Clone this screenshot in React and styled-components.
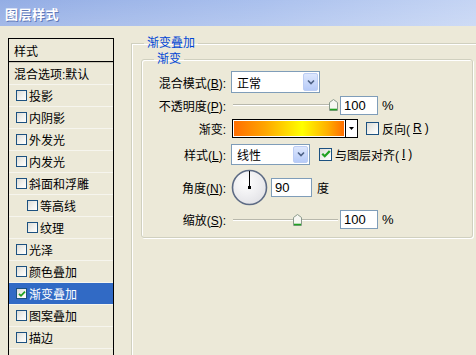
import React from 'react';
import styled, { createGlobalStyle } from 'styled-components';

const GlobalStyle = createGlobalStyle`
  html, body {
    margin: 0;
    padding: 0;
    background: #ece9d8;
  }
  body {
    font-family: "Liberation Sans", "Noto Sans CJK SC", sans-serif;
    font-size: 12px;
    color: #000;
    overflow: hidden;
  }
`;

const Window = styled.div`
  width: 476px;
  height: 355px;
  overflow: hidden;
  background: #ece9d8;
  display: flex;
  flex-direction: column;
`;

const TitleBar = styled.div`
  height: 26px;
  flex: none;
  display: flex;
  align-items: center;
  padding-left: 5px;
  background: linear-gradient(to bottom, rgba(255,255,255,0.08), rgba(255,255,255,0.22)),
    linear-gradient(to right, #8aa6e2 0%, #a3bbec 55%, #c0d1f3 100%);
  color: #fff;
  font-weight: bold;
  font-size: 13px;
  letter-spacing: 0.5px;
  text-shadow: 1px 1px 0 #5f78b8;
`;

const Body = styled.div`
  flex: 1;
  display: flex;
  padding: 12px 0 0 8px;
  min-height: 0;
`;

/* ---------- left style list ---------- */

const StyleList = styled.div`
  width: 104px;
  flex: none;
  height: 330px;
  border: 1px solid #000;
  border-bottom: none;
  display: flex;
  flex-direction: column;
`;

const ListHeader = styled.div`
  height: 22px;
  flex: none;
  display: flex;
  align-items: center;
  padding-left: 5px;
  border-bottom: 1px solid #000;
  box-shadow: 0 1px 0 #c9c6b6;
`;

const ListItem = styled.div`
  height: 21px;
  flex: none;
  display: flex;
  align-items: center;
  gap: 2px;
  padding-left: ${({ $indent }) => ($indent ? 18 : 7)}px;
  border-bottom: 1px solid #f6f5ee;
  background: ${({ $selected }) => ($selected ? '#316ac5' : 'transparent')};
  color: ${({ $selected }) => ($selected ? '#fff' : '#000')};
  margin-top: ${({ $first }) => ($first ? '1px' : '0')};
`;

const ListText = styled.span`
  white-space: nowrap;
  margin-left: ${({ $plain }) => ($plain ? -2 : 0)}px;
`;

/* ---------- checkbox ---------- */

const Box = styled.span`
  width: ${({ $size }) => $size}px;
  height: ${({ $size }) => $size}px;
  box-sizing: border-box;
  flex: none;
  border: 1px solid #1c5180;
  background: linear-gradient(135deg, #dcdcd7 0%, #f4f4f1 60%, #ffffff 100%);
  display: flex;
  align-items: center;
  justify-content: center;
`;

const CheckBox = ({ checked, size = 11 }) => (
  <Box $size={size}>
    {checked && (
      <svg width={size - 3} height={size - 3} viewBox="0 0 8 8">
        <path d="M1 3.8 L3 5.8 L7 1.6" fill="none" stroke="#21a121" strokeWidth="1.8" />
      </svg>
    )}
  </Box>
);

/* ---------- right panel ---------- */

const Right = styled.div`
  flex: 1;
  margin-left: 17px;
  margin-top: -3px;
  min-width: 0;
`;

const OuterGroup = styled.fieldset`
  margin: 0;
  padding: 0 0 0 9px;
  width: 420px;
  height: 340px;
  border: 1px solid #d0d0bf;
  border-right: none;
  border-bottom: none;
  box-shadow: inset 1px 1px 0 #fff;
`;

const GroupTitle = styled.legend`
  margin-left: ${({ $ml }) => $ml}px;
  padding: 0 3px;
  line-height: 16px;
  color: #0046d5;
`;

const InnerGroup = styled.fieldset`
  margin: 0;
  padding: 0;
  width: 332px;
  height: 187px;
  box-sizing: border-box;
  border: 1px solid #d0d0bf;
  border-radius: 3px;
  box-shadow: inset 1px 1px 0 #fff, 1px 1px 0 #fff;
  display: flex;
  flex-direction: column;
`;

const Form = styled.div`
  padding-top: 4px;
  display: flex;
  flex-direction: column;
`;

const Row = styled.div`
  height: ${({ $h }) => $h}px;
  display: grid;
  grid-template-columns: 84px auto;
  column-gap: 5px;
  align-items: center;
`;

const Label = styled.span`
  text-align: right;
  white-space: nowrap;
`;

const Controls = styled.div`
  display: flex;
  align-items: center;
  gap: ${({ $gap }) => $gap ?? 4}px;
`;

const Select = styled.div`
  width: ${({ $w }) => $w}px;
  height: ${({ $h }) => $h}px;
  box-sizing: border-box;
  border: 1px solid #7f9db9;
  background: #fff;
  display: flex;
  align-items: center;
  justify-content: space-between;
  padding: 1px 1px 1px 5px;
`;

const DropButton = styled.span`
  width: 15px;
  height: 100%;
  box-sizing: border-box;
  border: 1px solid #bccdf4;
  border-radius: 2px;
  background: linear-gradient(to bottom, #dde7fd, #b7cbf8);
  display: flex;
  align-items: center;
  justify-content: center;
`;

const Chevron = () => (
  <svg width="8" height="6" viewBox="0 0 8 6">
    <path d="M1 1.5 L4 4.5 L7 1.5" fill="none" stroke="#4d6185" strokeWidth="1.6" />
  </svg>
);

const NumberInput = styled.div`
  width: ${({ $w }) => $w}px;
  height: 19px;
  box-sizing: border-box;
  border: 1px solid #7f9db9;
  background: #fff;
  display: flex;
  align-items: center;
  padding-left: 3px;
  font-size: 13px;
`;

const Unit = styled.span`
  margin-left: ${({ $ml }) => $ml ?? 2}px;
  font-size: ${({ $latin }) => ($latin ? 13 : 12)}px;
`;

const SliderTrack = styled.div`
  position: relative;
  width: ${({ $w }) => $w}px;
  height: 14px;
  flex: none;
  margin-left: 2px;
  &::before {
    content: '';
    position: absolute;
    left: 0;
    right: 0;
    top: 6px;
    height: 1px;
    background: #b8b8ac;
    box-shadow: 0 1px 0 #fff;
  }
`;

const Thumb = styled.svg`
  position: absolute;
  top: 1px;
`;

const Slider = ({ width, value }) => (
  <SliderTrack $w={width}>
    <Thumb width="9" height="12" viewBox="0 0 9 12" style={{ left: Math.round(value * (width - 9)) }}>
      <path d="M0.5 3.5 L4.5 0.5 L8.5 3.5 V11.5 H0.5 Z" fill="#f7f7f2" stroke="#8a9a8c" />
      <path d="M1 10.5 H8" stroke="#21a121" strokeWidth="1.6" />
    </Thumb>
  </SliderTrack>
);

const GradientBar = styled.div`
  display: flex;
  height: 19px;
  border: 1px solid #000;
  box-sizing: border-box;
  margin-left: 1px;
`;

const GradientFill = styled.div`
  width: 110px;
  background: linear-gradient(to right, #ff6e02 0%, #ffa500 28%, #ffff00 62%, #ffb000 85%, #ff6d00 100%);
  border: 1px solid #fff;
`;

const GradientArrow = styled.span`
  width: 11px;
  background: #fff;
  border-left: 1px solid #000;
  display: flex;
  align-items: center;
  justify-content: center;
`;

const CheckLabel = styled.label`
  display: flex;
  align-items: center;
  gap: 3px;
  margin-left: ${({ $ml }) => $ml}px;
  white-space: nowrap;
`;

const U = styled.span`
  text-decoration: underline;
`;

const Dial = () => (
  <svg width="37" height="37" viewBox="0 0 37 37">
    <defs>
      <radialGradient id="dialFill" cx="0.4" cy="0.35" r="0.7">
        <stop offset="0" stopColor="#ffffff" />
        <stop offset="1" stopColor="#e2e2e6" />
      </radialGradient>
    </defs>
    <circle cx="18.5" cy="18.5" r="17" fill="url(#dialFill)" stroke="#5d6b84" strokeWidth="1.6" />
    <line x1="18.5" y1="18.5" x2="18.5" y2="2" stroke="#000" strokeWidth="1" />
    <rect x="17" y="17" width="3" height="3" fill="#000" />
  </svg>
);

const layerStyles = [
  { name: '投影' },
  { name: '内阴影' },
  { name: '外发光' },
  { name: '内发光' },
  { name: '斜面和浮雕' },
  { name: '等高线', indent: true },
  { name: '纹理', indent: true },
  { name: '光泽' },
  { name: '颜色叠加' },
  { name: '渐变叠加', checked: true, selected: true },
  { name: '图案叠加' },
  { name: '描边' },
];

export default function App() {
  return (
    <Window>
      <GlobalStyle />
      <TitleBar>图层样式</TitleBar>
      <Body>
        <StyleList>
          <ListHeader>样式</ListHeader>
          <ListItem $first>
            <ListText $plain>混合选项:默认</ListText>
          </ListItem>
          {layerStyles.map((s) => (
            <ListItem key={s.name} $indent={s.indent} $selected={s.selected}>
              <CheckBox checked={s.checked} />
              <ListText>{s.name}</ListText>
            </ListItem>
          ))}
          <ListItem />
        </StyleList>

        <Right>
          <OuterGroup>
            <GroupTitle $ml={3}>渐变叠加</GroupTitle>
            <InnerGroup>
              <GroupTitle $ml={12}>渐变</GroupTitle>
              <Form>
                <Row $h={22}>
                  <Label>混合模式(<U>B</U>):</Label>
                  <Select $w={89} $h={22}>
                    <span>正常</span>
                    <DropButton><Chevron /></DropButton>
                  </Select>
                </Row>
                <Row $h={24}>
                  <Label>不透明度(<U>P</U>):</Label>
                  <Controls $gap={2}>
                    <Slider width={105} value={1} />
                    <NumberInput $w={38}>100</NumberInput>
                    <Unit $latin $ml={2}>%</Unit>
                  </Controls>
                </Row>
                <Row $h={22}>
                  <Label>渐变:</Label>
                  <Controls $gap={0}>
                    <GradientBar>
                      <GradientFill />
                      <GradientArrow>
                        <svg width="5" height="3" viewBox="0 0 5 3"><path d="M0 0 H5 L2.5 3 Z" fill="#000" /></svg>
                      </GradientArrow>
                    </GradientBar>
                    <CheckLabel $ml={8}>
                      <CheckBox size={13} />
                      反向(<U>R</U>)
                    </CheckLabel>
                  </Controls>
                </Row>
                <Row $h={30}>
                  <Label>样式(<U>L</U>):</Label>
                  <Controls $gap={0}>
                    <Select $w={79} $h={21}>
                      <span>线性</span>
                      <DropButton><Chevron /></DropButton>
                    </Select>
                    <CheckLabel $ml={9}>
                      <CheckBox size={13} checked />
                      与图层对齐(<U>I</U>)
                    </CheckLabel>
                  </Controls>
                </Row>
                <Row $h={34}>
                  <Label>角度(<U>N</U>):</Label>
                  <Controls $gap={3}>
                    <Dial />
                    <NumberInput $w={41}>90</NumberInput>
                    <Unit>度</Unit>
                  </Controls>
                </Row>
                <Row $h={33}>
                  <Label>缩放(<U>S</U>):</Label>
                  <Controls $gap={2}>
                    <Slider width={105} value={0.62} />
                    <NumberInput $w={38}>100</NumberInput>
                    <Unit $latin $ml={2}>%</Unit>
                  </Controls>
                </Row>
              </Form>
            </InnerGroup>
          </OuterGroup>
        </Right>
      </Body>
    </Window>
  );
}
